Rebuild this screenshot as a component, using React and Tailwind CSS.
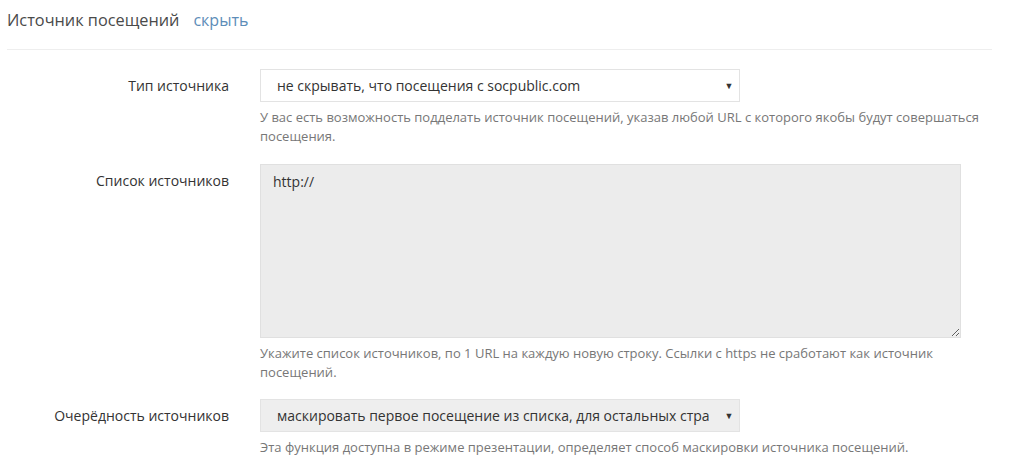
import React from 'react';

const Row = ({ label, children, help, className = '' }) => (
    <div className={`grid grid-cols-[222px_1fr] gap-x-[31px] ${className}`}>
        <div className="text-right text-[14px] text-[#333] pt-[7px] leading-[20px]">{label}</div>
        <div>
            {children}
            <p className="text-[13px] leading-[19px] text-[#777] mt-[6px] pr-[10px]">{help}</p>
        </div>
    </div>
);

const Select = ({ value, grey }) => (
    <div className={`w-[480px] h-[33px] flex items-center border border-[#e3e3e3] pl-[16px] pr-[4px] text-[14px] text-[#333] ${grey ? 'bg-[#eeeeee]' : 'bg-white'}`}>
        <span className="flex-1 min-w-0 whitespace-nowrap overflow-hidden">{value}</span>
        <span className="text-[9px] text-[#333] ml-[14px] w-[12px] text-center">▼</span>
    </div>
);

export default function App() {
    return (
        <div className="min-h-screen bg-white px-[7px] pt-[8px]" style={{ fontFamily: '"Open Sans", sans-serif' }}>
            {/* header */}
            <div className="flex items-baseline gap-[14px] pb-[17px] border-b border-[#eeeeee] w-[985px]">
                <h2 className="text-[16.3px] leading-[24px] text-[#4a4a4a]">Источник посещений</h2>
                <a className="text-[16px] text-[#5d8db8] cursor-pointer">скрыть</a>
            </div>

            <div className="flex flex-col pt-[19px]">
                <Row
                    className="pb-[18px]"
                    label="Тип источника"
                    help="У вас есть возможность подделать источник посещений, указав любой URL с которого якобы будут совершаться посещения."
                >
                    <Select value="не скрывать, что посещения с socpublic.com" />
                </Row>

                <Row
                    className="pb-[17px]"
                    label="Список источников"
                    help="Укажите список источников, по 1 URL на каждую новую строку. Ссылки с https не сработают как источник посещений."
                >
                    <textarea
                        defaultValue="http://"
                        className="block w-[701px] h-[174px] bg-[#ececec] border border-[#e0e0e0] px-[12px] py-[6px] text-[14px] leading-[22px] text-[#333] outline-none"
                    />
                </Row>

                <Row
                    label="Очерёдность источников"
                    help="Эта функция доступна в режиме презентации, определяет способ маскировки источника посещений."
                >
                    <Select grey value="маскировать первое посещение из списка, для остальных страниц" />
                </Row>
            </div>
        </div>
    );
}
